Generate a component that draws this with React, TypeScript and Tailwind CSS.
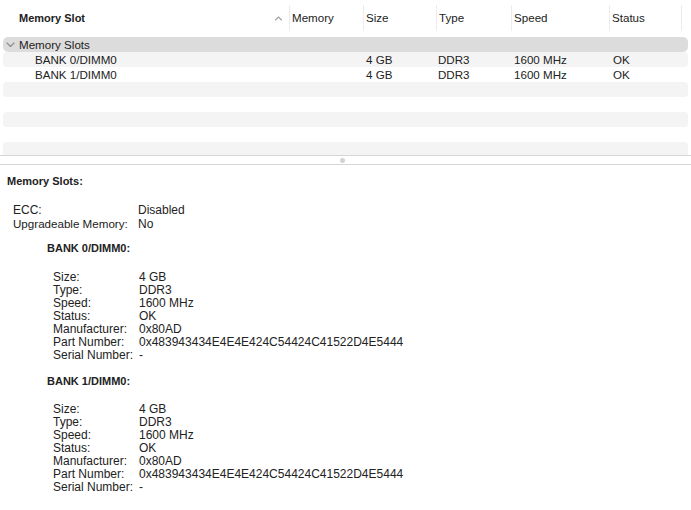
import React from 'react';

const cols = [286, 74, 73, 75, 98, 73];

const rows = [
  { slot: 'BANK 0/DIMM0', size: '4 GB', type: 'DDR3', speed: '1600 MHz', status: 'OK' },
  { slot: 'BANK 1/DIMM0', size: '4 GB', type: 'DDR3', speed: '1600 MHz', status: 'OK' },
];

const banks = [
  {
    name: 'BANK 0/DIMM0:',
    props: [
      ['Size:', '4 GB'],
      ['Type:', 'DDR3'],
      ['Speed:', '1600 MHz'],
      ['Status:', 'OK'],
      ['Manufacturer:', '0x80AD'],
      ['Part Number:', '0x483943434E4E4E424C54424C41522D4E5444'],
      ['Serial Number:', '-'],
    ],
  },
  {
    name: 'BANK 1/DIMM0:',
    props: [
      ['Size:', '4 GB'],
      ['Type:', 'DDR3'],
      ['Speed:', '1600 MHz'],
      ['Status:', 'OK'],
      ['Manufacturer:', '0x80AD'],
      ['Part Number:', '0x483943434E4E4E424C54424C41522D4E5444'],
      ['Serial Number:', '-'],
    ],
  },
];

const Chevron = ({ up }: { up?: boolean }) => (
  <svg width="9" height="6" viewBox="0 0 9 6" className="shrink-0">
    <polyline
      points={up ? '1.5,5 4.5,2 7.5,5' : '1,1 4.5,4.5 8,1'}
      fill="none"
      stroke={up ? '#a0a0a0' : '#8a8a8a'}
      strokeWidth="1.1"
      strokeLinecap="round"
      strokeLinejoin="round"
    />
  </svg>
);

export default function App() {
  const headers = ['Memory', 'Size', 'Type', 'Speed', 'Status'];

  return (
    <div className="w-[691px] h-[510px] bg-white overflow-hidden text-[11.6px] text-[#222] font-['Liberation_Sans',Arial,sans-serif]">
      {/* table pane */}
      <div className="h-[155px] overflow-hidden">
        <div className="flex h-[31px] px-[3px] items-end">
          <div style={{ width: cols[0] }} className="flex items-center h-[26px] pl-[16px] pr-[5px]">
            <span className="font-bold text-[11px]">Memory Slot</span>
            <span className="ml-auto mr-[1px]"><Chevron up /></span>
          </div>
          {headers.map((h, i) => (
            <div
              key={h}
              style={{ width: cols[i + 1] }}
              className="h-[26px] flex items-center pl-[2px] border-l border-[#ececec] last:border-r"
            >
              {h}
            </div>
          ))}
        </div>

        <div className="px-[3px] mt-[6px]">
          <div className="h-[15px] bg-[#dcdcdc] rounded-[5px] flex items-center pl-[3px]">
            <Chevron />
            <span className="ml-[4px]">Memory Slots</span>
          </div>
          {rows.map((r, i) => (
            <div
              key={r.slot}
              className={`h-[15px] flex items-center rounded-[4px] ${i % 2 === 0 ? 'bg-[#f4f4f4]' : 'bg-white'}`}
            >
              <div style={{ width: cols[0] }} className="pl-[32px]">{r.slot}</div>
              <div style={{ width: cols[1] }} className="pl-[3px]" />
              <div style={{ width: cols[2] }} className="pl-[3px]">{r.size}</div>
              <div style={{ width: cols[3] }} className="pl-[2px]">{r.type}</div>
              <div style={{ width: cols[4] }} className="pl-[3px]">{r.speed}</div>
              <div style={{ width: cols[5] }} className="pl-[4px]">{r.status}</div>
            </div>
          ))}
          {[0, 1, 2, 3, 4].map(i => (
            <div key={i} className={`h-[15px] rounded-[4px] ${i % 2 === 0 ? 'bg-[#f4f4f4]' : 'bg-white'}`} />
          ))}
        </div>
      </div>

      {/* split divider */}
      <div className="h-[10px] border-t border-b border-[#d6d6d6] bg-white flex items-center justify-center">
        <div className="w-[5px] h-[5px] rounded-full bg-[#d2d2d2] ml-[-6px]" />
      </div>

      {/* details pane */}
      <div className="pt-[10px] pl-[7px] leading-[13px] text-[12px]">
        <div className="font-bold text-[11px]">Memory Slots:</div>
        <div className="mt-[16px] pl-[6px]">
          <div className="flex"><span className="w-[125px]">ECC:</span><span>Disabled</span></div>
          <div className="flex items-baseline h-[13px] overflow-visible"><span className="w-[125px] text-[11.6px]">Upgradeable Memory:</span><span>No</span></div>
        </div>
        {banks.map((b, bi) => (
          <div key={b.name} className={bi === 0 ? 'mt-[12px] pl-[40px]' : 'mt-[13px] pl-[40px]'}>
            <div className="font-bold text-[11px]">{b.name}</div>
            <div className={bi === 0 ? 'mt-[16px] pl-[6px]' : 'mt-[15px] pl-[6px]'}>
              {b.props.map(([k, v]) => (
                <div key={k} className="flex">
                  <span className="w-[86px]">{k}</span>
                  <span>{v}</span>
                </div>
              ))}
            </div>
          </div>
        ))}
      </div>
    </div>
  );
}
